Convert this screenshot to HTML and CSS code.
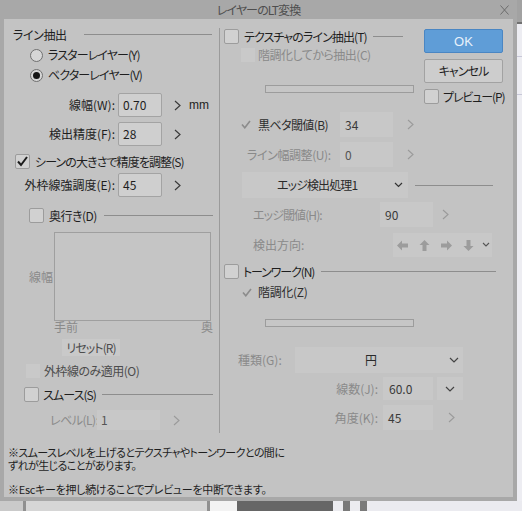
FILE: index.html
```html
<!DOCTYPE html>
<html lang="ja">
<head>
<meta charset="utf-8">
<title>レイヤーのLT変換</title>
<link rel="stylesheet" href="styles.css">
</head>
<body>
<div class="desk">
  <div class="dialog">
    <div class="titlebar">
      <span class="title">レイヤーのLT変換</span>
      <span class="close"><svg width="9" height="10" viewBox="0 0 9 10"><path d="M0.5 0.5 L8.5 9.5 M8.5 0.5 L0.5 9.5" stroke="#6c6c6c" stroke-width="1" fill="none"/></svg></span>
    </div>
    <div class="body">
      <div class="main">
        <div class="left">
          <div class="row l-head"><span class="sec-title">ライン抽出</span><span class="rule"></span></div>
          <div class="row l-radio1"><span class="radio"></span><span class="txt">ラスターレイヤー(Y)</span></div>
          <div class="row l-radio2"><span class="radio on"></span><span class="txt">ベクターレイヤー(V)</span></div>
          <div class="row field l-width"><span class="flabel">線幅(W):</span><span class="input">0.70</span><svg class="chev" width="7" height="11" viewBox="0 0 7 11"><polyline points="1,1 6,5.5 1,10" fill="none" stroke="#3a3a3a" stroke-width="1.2"/></svg><span class="unit">mm</span></div>
          <div class="row field l-prec"><span class="flabel">検出精度(F):</span><span class="input">28</span><svg class="chev" width="7" height="11" viewBox="0 0 7 11"><polyline points="1,1 6,5.5 1,10" fill="none" stroke="#3a3a3a" stroke-width="1.2"/></svg></div>
          <div class="row l-scene"><span class="cbox"><svg width="13" height="13" viewBox="0 0 13 13"><polyline points="2,6.5 5,10 11,2" fill="none" stroke="#1c1c1c" stroke-width="2"/></svg></span><span class="txt">シーンの大きさで精度を調整(S)</span></div>
          <div class="row field l-outer"><span class="flabel">外枠線強調度(E):</span><span class="input">45</span><svg class="chev" width="7" height="11" viewBox="0 0 7 11"><polyline points="1,1 6,5.5 1,10" fill="none" stroke="#3a3a3a" stroke-width="1.2"/></svg></div>
          <div class="row l-depth"><span class="cbox"></span><span class="txt">奥行き(D)</span><span class="rule"></span></div>
          <div class="row l-graph"><span class="glabel">線幅</span><div class="graph"></div></div>
          <div class="row l-axis"><span>手前</span><span>奥</span></div>
          <div class="row l-reset"><span class="reset">リセット(R)</span></div>
          <div class="row l-only"><span class="ghost"></span><span class="txt">外枠線のみ適用(O)</span></div>
          <div class="row l-smooth"><span class="cbox"></span><span class="txt">スムース(S)</span><span class="rule"></span></div>
          <div class="row l-level"><span class="llabel">レベル(L):</span><span class="dinput">1</span><svg class="chev" width="7" height="11" viewBox="0 0 7 11"><polyline points="1,1 6,5.5 1,10" fill="none" stroke="#9a9a9a" stroke-width="1.1"/></svg></div>
        </div>
        <div class="vsep"></div>
        <div class="right">
          <div class="top">
            <div class="tex">
              <div class="row r-tex"><span class="cbox"></span><span class="txt">テクスチャのライン抽出(T)</span><span class="rule"></span></div>
              <div class="row r-grad dim"><span class="ghost"></span><span class="txt">階調化してから抽出(C)</span></div>
              <div class="slider r-slider1"></div>
            </div>
            <div class="buttons">
              <div class="btn ok">OK</div>
              <div class="btn cancel">キャンセル</div>
              <div class="row r-preview"><span class="cbox"></span><span class="txt">プレビュー(P)</span></div>
            </div>
          </div>
          <div class="row r-black">
            <span class="rlabel"><svg class="tick" width="10" height="9" viewBox="0 0 10 9"><polyline points="1,4.5 3.8,7.8 9,1" fill="none" stroke="#8c8c8c" stroke-width="1.6"/></svg><span class="mid">黒ベタ閾値(B)</span></span>
            <span class="dinput val">34</span>
            <svg class="chev" width="7" height="11" viewBox="0 0 7 11"><polyline points="1,1 6,5.5 1,10" fill="none" stroke="#9a9a9a" stroke-width="1.1"/></svg>
          </div>
          <div class="row r-lw dim">
            <span class="rlabel">ライン幅調整(U):</span>
            <span class="dinput val">0</span>
            <svg class="chev" width="7" height="11" viewBox="0 0 7 11"><polyline points="1,1 6,5.5 1,10" fill="none" stroke="#9a9a9a" stroke-width="1.1"/></svg>
          </div>
          <div class="row r-edge">
            <span class="dropdown"><span class="mid">エッジ検出処理1</span><svg width="9" height="6" viewBox="0 0 9 6"><polyline points="1,1 4.5,4.5 8,1" fill="none" stroke="#333" stroke-width="1.2"/></svg></span>
            <span class="rule"></span>
          </div>
          <div class="row r-eth dim">
            <span class="rlabel">エッジ閾値(H):</span>
            <span class="dinput val">90</span>
            <svg class="chev" width="7" height="11" viewBox="0 0 7 11"><polyline points="1,1 6,5.5 1,10" fill="none" stroke="#9a9a9a" stroke-width="1.1"/></svg>
          </div>
          <div class="row r-dir dim">
            <span class="rlabel">検出方向:</span>
            <span class="arrows">
              <svg width="11" height="11" viewBox="0 0 11 11"><polygon points="0,5.5 5,0.5 5,3.5 11,3.5 11,7.5 5,7.5 5,10.5" fill="#9c9c9c"/></svg>
              <svg width="11" height="11" viewBox="0 0 11 11"><polygon points="5.5,0 10.5,5 7.5,5 7.5,11 3.5,11 3.5,5 0.5,5" fill="#9c9c9c"/></svg>
              <svg width="11" height="11" viewBox="0 0 11 11"><polygon points="11,5.5 6,0.5 6,3.5 0,3.5 0,7.5 6,7.5 6,10.5" fill="#9c9c9c"/></svg>
              <svg width="11" height="11" viewBox="0 0 11 11"><polygon points="5.5,11 10.5,6 7.5,6 7.5,0 3.5,0 3.5,6 0.5,6" fill="#9c9c9c"/></svg>
              <svg width="8" height="6" viewBox="0 0 8 6"><polyline points="1,1 4,4 7,1" fill="none" stroke="#555" stroke-width="1.1"/></svg>
            </span>
          </div>
          <div class="row r-tone"><span class="cbox"></span><span class="txt">トーンワーク(N)</span><span class="rule"></span></div>
          <div class="row r-grad2"><svg class="tick" width="10" height="9" viewBox="0 0 10 9"><polyline points="1,4.5 3.8,7.8 9,1" fill="none" stroke="#8c8c8c" stroke-width="1.6"/></svg><span class="mid">階調化(Z)</span></div>
          <div class="slider r-slider2"></div>
          <div class="row r-kind">
            <span class="rlabel dimt">種類(G):</span>
            <span class="dropdown2"><span class="mid">円</span><svg width="10" height="6" viewBox="0 0 10 6"><polyline points="1,1 5,5 9,1" fill="none" stroke="#444" stroke-width="1.2"/></svg></span>
          </div>
          <div class="row r-lines">
            <span class="rlabel2 dimt">線数(J):</span>
            <span class="dinput val2">60.0</span>
            <span class="chbox"><svg width="10" height="6" viewBox="0 0 10 6"><polyline points="1,1 5,5 9,1" fill="none" stroke="#444" stroke-width="1.2"/></svg></span>
          </div>
          <div class="row r-angle">
            <span class="rlabel2 dimt">角度(K):</span>
            <span class="dinput val2">45</span>
            <svg class="chev" width="7" height="11" viewBox="0 0 7 11"><polyline points="1,1 6,5.5 1,10" fill="none" stroke="#9a9a9a" stroke-width="1.1"/></svg>
          </div>
        </div>
      </div>
      <div class="notes">
        <p class="note1">※スムースレベルを上げるとテクスチャやトーンワークとの間に<br>ずれが生じることがあります。</p>
        <p class="note2">※Escキーを押し続けることでプレビューを中断できます。</p>
      </div>
    </div>
  </div>
  <div class="side"></div>
  <div class="floor">
    <span class="f1"></span><span class="f2"></span><span class="f3"></span><span class="f4"></span><span class="f5"></span><span class="f6"></span><span class="f5"></span><span class="f6"></span><span class="f7"></span>
  </div>
</div>
</body>
</html>
```

FILE: styles.css
```css
* { box-sizing: border-box; }
html, body { margin: 0; padding: 0; }
body {
  width: 522px;
  height: 511px;
  overflow: hidden;
  background: #ebebf0;
  font-family: "Noto Sans CJK JP", "Noto Sans", sans-serif;
  font-size: 12px;
  font-feature-settings: "palt" 1;
  letter-spacing: -0.9px;
  color: #1e1e1e;
  line-height: 1;
}
p { margin: 0; }

.desk {
  display: grid;
  grid-template-columns: 517px 5px;
  grid-template-rows: 501px 10px;
}

.dialog {
  background: #a8a8a8;
  padding: 0 4px 4px;
  display: flex;
  flex-direction: column;
}
.titlebar {
  height: 19px;
  flex: none;
  display: grid;
  grid-template-columns: 1fr auto 1fr;
  align-items: center;
}
.title { grid-column: 2; color: #4e4e4e; font-size: 12px; }
.close { grid-column: 3; justify-self: end; margin-right: 4px; display: flex; }

.body {
  flex: 1;
  background: #c3c3c3;
  display: flex;
  flex-direction: column;
}
.main { display: flex; flex: none; }
.left { width: 215px; padding-top: 8px; display: flex; flex-direction: column; }
.vsep { width: 1px; margin-top: 9px; height: 405px; background: #9b9b9b; flex: none; }
.right { width: 293px; padding-top: 10px; display: flex; flex-direction: column; }

.row { display: flex; align-items: center; flex: none; white-space: nowrap; }
.rule { flex: 1; height: 1px; background: #8d8d8d; }
.dim { color: #8a8a8a; }
.dimt { color: #8a8a8a; letter-spacing: 0; }

.radio {
  width: 13px; height: 13px;
  border: 1px solid #707070;
  border-radius: 50%;
  background: #d6d6d6;
  display: flex; align-items: center; justify-content: center;
  flex: none;
}
.radio.on::after { content: ""; width: 7px; height: 7px; border-radius: 50%; background: #161616; }

.cbox {
  width: 15px; height: 15px;
  border: 1px solid #9c9c9c;
  border-radius: 2px;
  background: #d1d1d1;
  display: flex; align-items: center; justify-content: center;
  flex: none;
}
.ghost { width: 14px; height: 14px; background: #c9c9c9; flex: none; }

.input {
  width: 44px; height: 24px;
  border: 1px solid #a3a3a3;
  border-radius: 2px;
  background: #cfcfcf;
  padding-left: 4px;
  display: flex; align-items: center;
  margin-left: 3px;
  color: #1e1e1e;
  letter-spacing: 0;
  flex: none;
}
.dinput {
  background: #c8c8c8;
  display: flex; align-items: center;
  height: 100%;
  letter-spacing: 0;
  flex: none;
}
.chev { flex: none; }

/* left column rows */
.l-head { height: 15px; padding-left: 9px; padding-right: 7px; }
.sec-title { letter-spacing: -0.4px; }
.l-head .rule { margin-left: 17px; }
.l-radio1 { height: 16px; margin-top: 5px; padding-left: 26px; }
.l-radio2 { height: 16px; margin-top: 4px; padding-left: 26px; }
.l-radio1 .txt, .l-radio2 .txt { margin-left: 5px; }
.field { height: 24px; }
.flabel { width: 111px; text-align: right; flex: none; letter-spacing: 0; }
.field .chev { margin-left: 12px; }
.unit { margin-left: 8px; font-family: "Liberation Sans", sans-serif; font-size: 12px; letter-spacing: 0; }
.l-width { margin-top: 10px; }
.l-prec { margin-top: 5px; }
.l-scene { height: 15px; margin-top: 8px; padding-left: 11px; }
.l-scene .txt { margin-left: 5px; }
.l-outer { margin-top: 4px; }
.l-depth { height: 15px; margin-top: 11px; padding-left: 25px; padding-right: 6px; }
.l-depth .txt { margin-left: 5px; letter-spacing: -0.5px; }
.l-depth .rule { margin-left: 7px; }
.l-graph { height: 89px; margin-top: 9px; }
.glabel { width: 50px; text-align: right; padding-right: 1px; color: #8a8a8a; flex: none; letter-spacing: 0; }
.graph { width: 157px; height: 89px; border: 1px solid #9f9f9f; background: #c5c5c5; }
.l-axis { height: 12px; padding-left: 50px; width: 209px; justify-content: space-between; color: #8a8a8a; letter-spacing: 0; }
.l-reset { height: 17px; margin-top: 6px; padding-left: 58px; }
.reset {
  width: 58px; height: 17px;
  background: #c9c9c9;
  color: #4c4c4c;
  display: flex; align-items: center; justify-content: center;
}
.l-only { height: 15px; margin-top: 7px; padding-left: 22px; color: #4c4c4c; }
.l-only .txt { margin-left: 4px; letter-spacing: -0.5px; }
.l-smooth { height: 15px; margin-top: 9px; padding-left: 20px; padding-right: 6px; }
.l-smooth .txt { margin-left: 4px; }
.l-smooth .rule { margin-left: 6px; }
.l-level { height: 20px; margin-top: 8px; padding-left: 46px; }
.llabel { width: 47px; color: #8a8a8a; flex: none; letter-spacing: -0.5px; }
.l-level .dinput { width: 63px; padding-left: 4px; color: #555; }
.l-level .chev { margin-left: 13px; }

/* right column */
.top { display: flex; flex: none; }
.tex { width: 195px; display: flex; flex-direction: column; }
.r-tex { height: 15px; padding-left: 4px; padding-right: 12px; }
.r-tex .txt { margin-left: 5px; }
.r-tex .rule { margin-left: 6px; }
.r-grad { height: 14px; margin-top: 4px; padding-left: 21px; }
.r-grad .txt { margin-left: 3px; letter-spacing: -0.5px; }
.slider { width: 149px; height: 8px; margin-left: 45px; border: 1px solid #9c9c9c; background: #c6c6c6; flex: none; }
.r-slider1 { margin-top: 23px; }

.buttons { width: 79px; margin-left: 9px; display: flex; flex-direction: column; }
.btn {
  height: 24px;
  border-radius: 2px;
  display: flex; align-items: center; justify-content: center;
}
.ok { background: #5f9dd7; border: 1px solid #4a86c3; color: #e8f1fb; font-family: "Liberation Sans", sans-serif; font-size: 13px; letter-spacing: 0; }
.cancel { margin-top: 6px; background: #cdcdcd; border: 1px solid #a2a2a2; color: #1e1e1e; }
.r-preview { height: 15px; margin-top: 6px; }
.r-preview .txt { margin-left: 4px; letter-spacing: -1.1px; }

.rlabel { display: flex; align-items: center; flex: none; }
.val { width: 53px; padding-left: 5px; color: #3a3a3a; }
.r-black { height: 25px; margin-top: 8px; padding-left: 21px; }
.r-black .rlabel { width: 99px; color: #2e2e2e; }
.r-black .mid { margin-left: 7px; letter-spacing: -0.6px; }
.r-black .chev, .r-lw .chev { margin-left: 14px; }
.r-lw { height: 25px; margin-top: 5px; padding-left: 27px; }
.r-lw .rlabel { width: 93px; letter-spacing: -0.4px; }
.r-lw .val { color: #555; }
.r-edge { height: 26px; margin-top: 5px; padding-left: 22px; padding-right: 20px; }
.dropdown {
  width: 166px; height: 26px;
  background: #c8c8c8;
  display: flex; align-items: center; justify-content: space-between;
  padding-left: 35px; padding-right: 5px;
  color: #2a2a2a;
  flex: none;
}
.r-edge .rule { margin-left: 7px; }
.r-eth { height: 25px; margin-top: 4px; padding-left: 33px; }
.r-eth .rlabel { width: 127px; }
.r-eth .val { color: #3a3a3a; }
.r-eth .chev { margin-left: 9px; }
.r-dir { height: 24px; margin-top: 6px; padding-left: 33px; }
.r-dir .rlabel { width: 140px; letter-spacing: 0; }
.arrows {
  width: 99px; height: 24px;
  background: #c8c8c8;
  display: flex; align-items: center; gap: 11px;
  padding-left: 4px;
  flex: none;
}
.arrows svg:last-child { margin-left: -3px; }
.r-tone { height: 15px; margin-top: 7px; padding-left: 4px; padding-right: 17px; }
.r-tone .txt { margin-left: 4px; letter-spacing: -1.1px; }
.r-tone .rule { margin-left: 7px; }
.r-grad2 { height: 14px; margin-top: 6px; padding-left: 22px; color: #2e2e2e; }
.r-grad2 .mid { margin-left: 6px; letter-spacing: -0.3px; }
.r-slider2 { margin-top: 20px; }
.r-kind { height: 26px; margin-top: 20px; padding-left: 18px; }
.r-kind .rlabel { width: 57px; }
.dropdown2 {
  width: 168px; height: 26px;
  background: #c8c8c8;
  display: flex; align-items: center; justify-content: space-between;
  padding-left: 70px; padding-right: 4px;
  color: #2a2a2a;
  flex: none;
}
.rlabel2 { width: 158px; text-align: right; flex: none; }
.val2 { width: 50px; margin-left: 5px; padding-left: 6px; color: #3a3a3a; }
.r-lines { height: 23px; margin-top: 4px; }
.chbox { width: 26px; height: 23px; margin-left: 4px; background: #c8c8c8; display: flex; align-items: center; justify-content: center; flex: none; }
.r-angle { height: 25px; margin-top: 5px; }
.r-angle .val2 { padding-left: 5px; }
.r-angle .chev { margin-left: 15px; }

/* notes */
.notes { padding-left: 4px; margin-top: 13px; line-height: 13px; font-size: 11px; letter-spacing: -0.6px; }
.note2 { margin-top: 11px; letter-spacing: -0.3px; }

/* surroundings */
.side {
  background: linear-gradient(#a2a2a2 0 22px, #707070 22px 24px, #ededf2 24px 56px, #c8c8d8 56px 57px, #ededf2 57px 94px, #c8c8d8 94px 95px, #ededf2 95px);
}
.floor { grid-column: 1 / 3; display: flex; }
.floor span { height: 10px; }
.f1 { width: 23px; background: #cacaca; }
.f2 { width: 187px; background: #d6d6d6; border-left: 3px solid #909090; border-right: 3px solid #909090; }
.f3 { width: 27px; background: #f3f3f3; }
.f4 { width: 96px; background: #666; }
.f5 { width: 10px; background: #ececf0; }
.f6 { width: 7px; background: #7a7a7a; }
.f7 { flex: 1; background: #ebebf0; }
```
